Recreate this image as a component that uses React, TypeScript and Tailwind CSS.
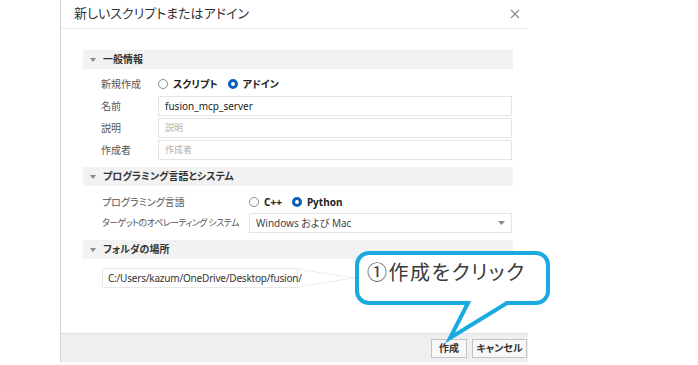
import React from "react";

const jp = "[font-family:'Noto_Sans','Noto_Sans_CJK_JP',sans-serif] [font-feature-settings:'palt']";

const Radio = ({ on, label }: { on?: boolean; label: string }) => (
    <div className="flex items-center gap-[5px]">
        {on ? (
            <span className="h-[10px] w-[10px] rounded-full border-[3px] border-[#0b5fb8] bg-white" />
        ) : (
            <span className="h-[10px] w-[10px] rounded-full border border-[#8a8a8a] bg-white" />
        )}
        <span className="text-[10px] font-bold text-[#222]">{label}</span>
    </div>
);

const Section = ({ title }: { title: string }) => (
    <div className="flex h-[19px] items-center bg-[#f2f2f2] pl-[7px]">
        <svg width="6" height="4" viewBox="0 0 6 4" className="mr-[7px]">
            <path d="M0 0 H6 L3 4 Z" fill="#8a8a8a" />
        </svg>
        <span className="text-[10px] font-bold text-[#333]">{title}</span>
    </div>
);

const Field = ({ value, placeholder }: { value?: string; placeholder?: string }) => (
    <div className="flex h-[20px] flex-1 items-center border border-[#e4e4e4] bg-white px-[6px]">
        {value ? (
            <span className="text-[10px] text-[#222]">{value}</span>
        ) : (
            <span className="text-[9px] text-[#b0b0b0]">{placeholder}</span>
        )}
    </div>
);

const Row = ({ label, children }: { label: string; children: React.ReactNode }) => (
    <div className="flex h-[20px] items-center pl-[18px]">
        <span className="w-[57px] text-[10px] text-[#555]">{label}</span>
        {children}
    </div>
);

export default function App() {
    return (
        <div className={`relative h-[365px] w-[698px] overflow-hidden bg-white ${jp}`}>
            <div className="ml-[60px] flex h-[362px] w-[468px] flex-col border-l border-[#d2d2d2]">
                <div className="flex h-[29px] items-center justify-between border-b border-[#ececec] pl-[13px] pr-[8px]">
                    <span className="text-[13px] text-[#333]">新しいスクリプトまたはアドイン</span>
                    <svg width="10" height="10" viewBox="0 0 10 10">
                        <path d="M1 1 L9 9 M9 1 L1 9" stroke="#8c8c8c" strokeWidth="1.2" />
                    </svg>
                </div>

                <div className="flex w-[452px] flex-col pl-[22px] pt-[21px]">
                    <Section title="一般情報" />

                    <div className="mt-[5px] flex flex-col gap-[2px] pr-[1px]">
                        <Row label="新規作成">
                            <div className="flex items-center gap-[10px]">
                                <Radio label="スクリプト" />
                                <Radio on label="アドイン" />
                            </div>
                        </Row>
                        <Row label="名前">
                            <Field value="fusion_mcp_server" />
                        </Row>
                        <Row label="説明">
                            <Field placeholder="説明" />
                        </Row>
                        <Row label="作成者">
                            <Field placeholder="作成者" />
                        </Row>
                    </div>

                    <div className="mt-[7px]">
                        <Section title="プログラミング言語とシステム" />
                    </div>

                    <div className="flex h-[26px] items-center pl-[19px] pt-[6px]">
                        <span className="w-[147px] text-[10px] text-[#555]">プログラミング言語</span>
                        <div className="flex items-center gap-[10px]">
                            <Radio label="C++" />
                            <Radio on label="Python" />
                        </div>
                    </div>
                    <div className="mt-[1px] flex h-[20px] items-center pl-[19px] pr-[1px]">
                        <span className="w-[147px] whitespace-nowrap text-[9px] tracking-[-0.6px] text-[#555]">
                            ターゲットのオペレーティング システム
                        </span>
                        <div className="flex h-[20px] flex-1 items-center justify-between border border-[#e4e4e4] bg-white pl-[6px] pr-[6px]">
                            <span className="text-[10px] text-[#444]">Windows および Mac</span>
                            <svg width="7" height="4" viewBox="0 0 7 4">
                                <path d="M0 0 H7 L3.5 4 Z" fill="#8a8a8a" />
                            </svg>
                        </div>
                    </div>

                    <div className="mt-[7px]">
                        <Section title="フォルダの場所" />
                    </div>

                    <div className="mt-[8px] flex items-center pl-[19px]">
                        <div className="flex h-[20px] w-[196px] items-center border border-[#e8e8e8] bg-white px-[5px]">
                            <span className="whitespace-nowrap text-[10px] tracking-[-0.2px] text-[#333]">
                                C:/Users/kazum/OneDrive/Desktop/fusion/
                            </span>
                        </div>
                        <svg width="110" height="22" viewBox="0 0 110 22">
                            <path d="M0 2 L110 20 M0 20 L110 2" stroke="#ececec" strokeWidth="1" />
                        </svg>
                    </div>
                </div>

                <div className="mt-auto flex h-[29px] items-center justify-end gap-[5px] border-t border-[#e2e2e2] bg-[#efefef] pr-[1px]">
                    <button className="h-[19px] w-[36px] border border-[#c4c4c4] bg-[#f8f8f8] text-[10px] font-bold text-[#333]">
                        作成
                    </button>
                    <button className="h-[19px] w-[55px] border border-[#c4c4c4] bg-[#f8f8f8] text-[10px] font-bold text-[#333]">
                        キャンセル
                    </button>
                </div>
            </div>

            <svg className="absolute left-[350px] top-[245px]" width="205" height="100" viewBox="0 0 205 100">
                <path
                    d="M19 8 H186 A12 12 0 0 1 198 20 V46 A12 12 0 0 1 186 58 H157 L100 93 L118 58 H19 A12 12 0 0 1 7 46 V20 A12 12 0 0 1 19 8 Z"
                    fill="#ffffff"
                    stroke="#1ba9e2"
                    strokeWidth="4"
                    strokeLinejoin="miter"
                />
            </svg>
            <div className="absolute left-[367px] top-[260px] text-[20px] leading-[26px] tracking-[1.5px] text-[#3a3a3a] [font-feature-settings:'normal']">
                ①作成をクリック
            </div>
        </div>
    );
}
